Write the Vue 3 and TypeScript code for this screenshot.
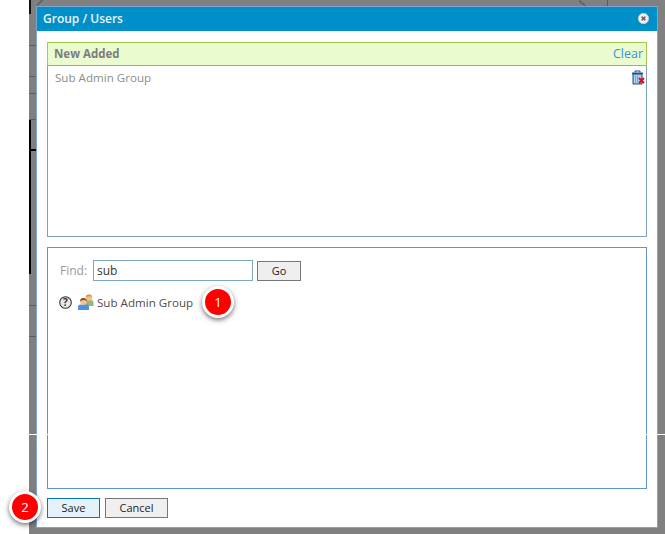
<script setup lang="ts">
const title: string = 'Group / Users'
const stripLines: number[] = [45, 76, 93, 119, 305, 336]
</script>

<template>
  <div class="page">
    <div class="stage">
      <i class="edge edge-a"></i>
      <i class="edge edge-b"></i>
      <i class="edge edge-d"></i>
      <i class="edge edge-c"></i>
      <i v-for="y in stripLines" :key="y" class="edge strip-line" :style="{ top: y + 'px' }"></i>
      <svg class="edge diag diag-l" width="7" height="6" viewBox="0 0 7 6"><path d="M0 5.5L5.5 0" stroke="#5c5c5c" stroke-width="1.4" /></svg>
      <svg class="edge diag diag-r" width="7" height="6" viewBox="0 0 7 6"><path d="M0 .5L6 5.5" stroke="#5c5c5c" stroke-width="1.4" /></svg>
      <div class="dialog">
        <header class="titlebar">
          <span class="title">{{ title }}</span>
          <span class="close">
            <svg width="11" height="11" viewBox="0 0 11 11">
              <circle cx="5.5" cy="5.5" r="5.2" fill="#f2f2f2" stroke="#c4ccd2" stroke-width="0.8" />
              <path d="M3.6 3.6l3.8 3.8M7.4 3.6l-3.8 3.8" stroke="#666" stroke-width="1.5" />
            </svg>
          </span>
        </header>
        <div class="body">
          <section class="panel added">
            <div class="added-head">
              <strong>New Added</strong>
              <a class="clear">Clear</a>
            </div>
            <div class="added-row">
              <span>Sub Admin Group</span>
              <svg class="trash" width="14" height="15" viewBox="0 0 14 15">
                <path d="M4 2.5V1h5v1.5" fill="none" stroke="#10487c" stroke-width="1" />
                <rect x="1" y="2.5" width="11" height="1.6" fill="#1d5d96" />
                <path d="M2 4h9v10H2z" fill="#a9d5f4" stroke="#10487c" />
                <path d="M4.5 5.5v7M6.5 5.5v7" stroke="#6aa9d8" />
                <path d="M8 8l5 5M13 8l-5 5" stroke="#c8161c" stroke-width="2" />
              </svg>
            </div>
          </section>
          <section class="panel finder">
            <div class="find-row">
              <label class="find-label">Find:</label>
              <input class="find-input" value="sub" />
              <button class="btn go">Go</button>
            </div>
            <div class="result">
              <svg class="help" width="13" height="13" viewBox="0 0 13 13">
                <circle cx="6.5" cy="6.5" r="5.8" fill="#e8e8e8" stroke="#333" stroke-width="1.1" />
                <text x="6.5" y="9.8" text-anchor="middle" class="q">?</text>
              </svg>
              <svg class="users" width="16" height="16" viewBox="0 0 16 16">
                <path d="M6.5 12V8.5q0-2.4 2.4-2.4h4.2q2.4 0 2.4 2.4V12z" fill="#8dbb78" />
                <circle cx="11" cy="3.8" r="3.2" fill="#f0c184" />
                <path d="M7.8 3.6a3.2 3.2 0 0 1 6.4 0q-1-1.6-3.2-1.4t-3.2 1.4z" fill="#d09a4c" />
                <path d="M0 16v-3q0-2.6 2.6-2.6h5.8q2.6 0 2.6 2.6v3z" fill="#4f93e0" />
                <circle cx="5.5" cy="7.6" r="3.3" fill="#f3c29a" />
                <path d="M2.1 7.4a3.4 3.4 0 0 1 6.8 0q-1.5-1.6-3.4-1.4t-3.4 1.4z" fill="#8a4d26" />
              </svg>
              <span class="result-name">Sub Admin Group</span>
              <span class="badge badge-one">1</span>
            </div>
          </section>
          <footer class="actions">
            <span class="badge badge-two">2</span>
            <button class="btn save">Save</button>
            <button class="btn cancel">Cancel</button>
          </footer>
        </div>
      </div>
    </div>
    <i class="scanline"></i>
  </div>
</template>

<style>
html, body { margin: 0; background: #fff; }
</style>

<style scoped>
.page {
  position: relative;
  width: 665px;
  height: 534px;
  overflow: hidden;
  background: #fff;
  padding-left: 29px;
  box-sizing: border-box;
  font-family: "Open Sans", "Liberation Sans", sans-serif;
}
.stage {
  position: relative;
  height: 534px;
  box-sizing: border-box;
  background: #808080;
  padding: 6px 7px 6px 7px;
}
.edge { position: absolute; display: block; }
.edge-a { left: 0; top: 0; width: 2px; height: 14px; background: #111; }
.edge-b { left: 0; top: 120px; width: 2px; height: 154px; background: #000; }
.edge-d { left: 0; top: 149px; width: 7px; height: 2px; background: #000; }
.edge-c { left: 578px; top: 0; width: 1px; height: 6px; background: #5a5a5a; }
.strip-line { left: 0; width: 7px; height: 1px; background: #5e5e5e; }
.diag-l { left: 8px; top: 0; }
.diag-r { left: 550px; top: 0; }
.scanline {
  position: absolute;
  left: 0;
  right: 0;
  top: 434px;
  height: 1px;
  background: #fff;
  display: block;
}
.dialog {
  position: relative;
  height: 522px;
  box-sizing: border-box;
  border: 1px solid #7aa7d2;
  background: #fff;
  display: flex;
  flex-direction: column;
}
.titlebar {
  height: 24px;
  flex: none;
  background: #0090c9;
  color: #e8f4fa;
  display: flex;
  align-items: center;
  justify-content: space-between;
  padding: 0 8px 2px 6px;
  box-sizing: border-box;
  font-size: 12px;
  font-weight: 600;
}
.close { display: flex; }
.body {
  flex: 1;
  display: flex;
  flex-direction: column;
  padding: 11px 10px 10px 10px;
  gap: 10px;
}
.panel { box-sizing: border-box; }
.added {
  height: 195px;
  border: 1px solid #7f9fc0;
  border-top: 0;
}
.added-head {
  height: 24px;
  box-sizing: border-box;
  margin: 0 -1px;
  padding: 0 3px 1px 6px;
  background: #eafbcf;
  border: 1px solid #a3c84a;
  border-bottom: 1px solid #8fa8bc;
  display: flex;
  align-items: center;
  justify-content: space-between;
  font-size: 11.5px;
}
.added-head strong { color: #7d7d7d; font-weight: 700; }
.clear { color: #3d92d6; font-size: 12.5px; }
.added-row {
  display: flex;
  justify-content: space-between;
  align-items: flex-start;
  padding: 4px 1px 0 7px;
  font-size: 11.6px;
  line-height: 16px;
  color: #8c8c8c;
}
.finder {
  height: 242px;
  border: 1px solid #5f93d3;
  padding: 12px 12px;
}
.find-row { display: flex; align-items: flex-end; height: 21px; }
.find-label { color: #9a9a9a; font-size: 12px; width: 33px; line-height: 20px; }
.find-input {
  width: 160px;
  height: 21px;
  box-sizing: border-box;
  border: 1px solid #7ba6c4;
  padding: 0 3px 1px;
  font: 12px "Open Sans", sans-serif;
  color: #333;
  outline: none;
  margin-right: 4px;
}
.btn {
  box-sizing: border-box;
  height: 20px;
  padding: 0 0 1px;
  background: #efefef;
  border: 1px solid #777;
  font: 11px "Open Sans", sans-serif;
  color: #222;
}
.go { width: 44px; }
.result {
  position: relative;
  display: flex;
  align-items: center;
  margin-top: 11px;
  height: 20px;
  font-size: 11.6px;
  color: #4d4d4d;
}
.help { margin: 0 6px 0 -1px; }
.users { margin-right: 3px; }
.q { font: 700 10px "Open Sans", sans-serif; fill: #333; }
.badge {
  position: absolute;
  width: 32px;
  height: 32px;
  box-sizing: border-box;
  border: 3px solid #fff;
  border-radius: 50%;
  background: #fe0000;
  color: #fff;
  display: flex;
  align-items: center;
  justify-content: center;
  font-size: 13px;
  box-shadow: 0 2px 5px rgba(0, 0, 0, .55);
}
.badge-one { left: 142px; top: -6px; }
.badge-two { left: -38px; top: -7px; }
.actions {
  position: relative;
  display: flex;
  gap: 5px;
  margin-top: -1px;
}
.save {
  width: 53px;
  background: #e5f1fb;
  border-color: #0078b4;
}
.cancel { width: 63px; }
</style>
